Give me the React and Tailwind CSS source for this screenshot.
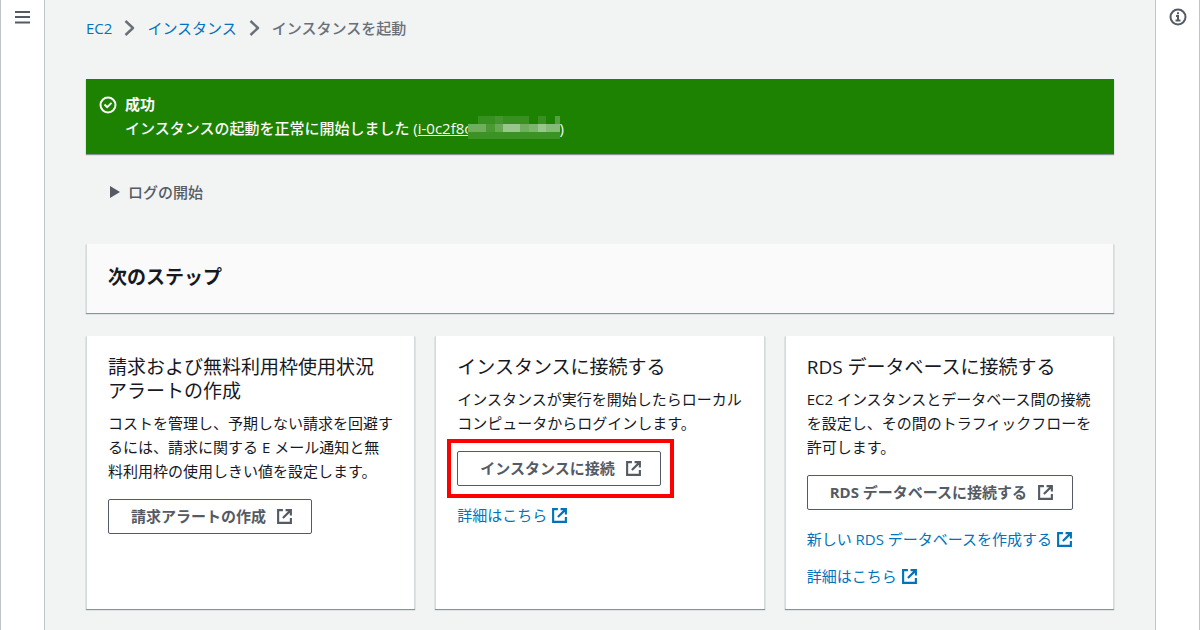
import React from 'react';

const ExternalIcon = () => (
  <svg width="17" height="17" viewBox="0 0 16 16" fill="none" stroke="currentColor" strokeWidth="2" className="shrink-0" aria-hidden="true">
    <path d="M6.5 2H2v12h12V9.5" />
    <path d="M9 2h5v5M14 2L6.5 9.5" />
  </svg>
);

const Chevron = () => (
  <svg width="11" height="16" viewBox="0 0 11 16" fill="none" stroke="#687078" strokeWidth="2.4" strokeLinejoin="round" aria-hidden="true">
    <path d="M1.5 1l7.5 7-7.5 7" />
  </svg>
);

// [x, y, width, height, opacity]
const mosaic = [
  [0, 16, 92, 7, 0.14],
  [10, 0, 51, 8, 0.12],
  [27, 0, 8, 8, 0.06],
  [70, 0, 8, 8, 0.12],
  [87, 0, 5, 8, 0.25],
  [0, 8, 18, 8, 0.36],
  [18, 8, 9, 8, 0.2],
  [27, 8, 8, 8, 0.32],
  [35, 8, 17, 8, 0.55],
  [52, 8, 9, 8, 0.36],
  [61, 8, 9, 8, 0.42],
  [70, 8, 8, 8, 0.55],
  [78, 8, 14, 8, 0.46],
];

const steps = [
  {
    title: '請求および無料利用枠使用状況アラートの作成',
    text: 'コストを管理し、予期しない請求を回避するには、請求に関する E メール通知と無料利用枠の使用しきい値を設定します。',
    button: '請求アラートの作成',
    links: [],
  },
  {
    title: 'インスタンスに接続する',
    text: 'インスタンスが実行を開始したらローカルコンピュータからログインします。',
    button: 'インスタンスに接続',
    highlight: true,
    links: ['詳細はこちら'],
  },
  {
    title: 'RDS データベースに接続する',
    text: 'EC2 インスタンスとデータベース間の接続を設定し、その間のトラフィックフローを許可します。',
    button: 'RDS データベースに接続する',
    links: ['新しい RDS データベースを作成する', '詳細はこちら'],
  },
];

const StepCard = ({ step }) => (
  <article className="bg-white border-x border-[#d5dbdb] shadow-[0_1px_1px_#879596] px-[21px] pt-[19px] pb-[21px]">
    <h3 className="pr-2 text-[19px] leading-6 text-[#16191f]">{step.title}</h3>
    <p className="mt-2 leading-6">{step.text}</p>
    <div className="mt-4 flex">
      <div className="relative">
        <button className="flex items-center gap-[10px] h-[35px] pl-[22px] pr-[18px] border border-[#545b64] rounded-xs bg-white font-bold text-[#545b64] whitespace-nowrap">
          {step.button}
          <ExternalIcon />
        </button>
        {step.highlight && (
          <div className="absolute -left-[10px] -right-[13px] -top-3 -bottom-3 border-4 border-[#ff0000] pointer-events-none"></div>
        )}
      </div>
    </div>
    <div className="mt-[17px] flex flex-col items-start gap-[13px]">
      {step.links.map((link) => (
        <a key={link} href="#" className="flex items-center gap-1 leading-6 text-[#0073bb]">
          {link}
          <ExternalIcon />
        </a>
      ))}
    </div>
  </article>
);

const App = () => {
  return (
    <div className="flex min-h-screen bg-[#f2f3f3] text-[15px] text-[#16191f] font-['Open_Sans','Noto_Sans_CJK_JP',sans-serif]">
      <nav className="w-[45px] shrink-0 bg-white border-x border-[#bfc5c6] flex flex-col items-center pt-2">
        <button aria-label="メニュー" className="text-[#545b64]">
          <svg width="16" height="18" viewBox="0 0 16 18" fill="none" stroke="currentColor" strokeWidth="2">
            <path d="M0 4h15M0 9h15M0 14.5h15" />
          </svg>
        </button>
      </nav>

      <main className="flex-1 min-w-0 px-[41px] pt-4 pb-5">
        <nav className="flex items-center gap-3 leading-6">
          <a href="#" className="text-[#0073bb]">EC2</a>
          <Chevron />
          <a href="#" className="text-[#0073bb]">インスタンス</a>
          <Chevron />
          <span className="text-[#687078] font-medium">インスタンスを起動</span>
        </nav>

        <section className="mt-[39px] flex gap-2 bg-[#1d8102] text-[#fafafa] px-[13px] pt-[13px] pb-[14px] leading-6 shadow-[0_1px_1px_#879596]">
          <svg width="18" height="18" viewBox="0 0 18 18" fill="none" stroke="currentColor" strokeWidth="2" className="mt-1 shrink-0" aria-hidden="true">
            <circle cx="9" cy="9" r="7.5" />
            <path d="M5.5 8.5l2.7 2.7 4.3-4.3" />
          </svg>
          <div>
            <h2 className="font-bold">成功</h2>
            <p className="flex font-medium">
              <span className="whitespace-pre">インスタンスの起動を正常に開始しました (</span>
              <a href="#" className="underline">i-0c2f8c</a>
              <svg width="92" height="24" viewBox="0 0 92 24" fill="#fff" shapeRendering="crispEdges" className="-ml-1 relative" aria-hidden="true">
                <rect width="92" height="24" fill="#1d8102" />
                {mosaic.map(([x, y, w, h, o], i) => (
                  <rect key={i} x={x} y={y} width={w} height={h} opacity={o} />
                ))}
              </svg>
              )
            </p>
          </div>
        </section>

        <button className="mt-[26px] ml-6 flex items-center gap-2 leading-6 font-medium text-[#545b64]">
          <svg width="10" height="12" viewBox="0 0 10 12" fill="currentColor" aria-hidden="true">
            <path d="M0 0l10 6-10 6z" />
          </svg>
          ログの開始
        </button>

        <section className="mt-10 bg-[#fafafa] border-x border-[#d5dbdb] shadow-[0_1px_1px_#879596] px-[21px] pt-[19px] pb-[22px]">
          <h2 className="text-[19px] leading-7 font-bold">次のステップ</h2>
        </section>

        <div className="mt-[23px] grid grid-cols-3 gap-5">
          {steps.map((step) => (
            <StepCard key={step.title} step={step} />
          ))}
        </div>
      </main>

      <aside className="w-[45px] shrink-0 bg-white border-x border-[#bfc5c6] flex flex-col items-center pt-2">
        <button aria-label="情報" className="text-[#545b64]">
          <svg width="18" height="18" viewBox="0 0 18 18" fill="none" stroke="currentColor" strokeWidth="2">
            <circle cx="9" cy="9" r="7.5" />
            <path d="M8 5.2h2M7 8h2v4.5M6.5 12.5h5" />
          </svg>
        </button>
      </aside>
    </div>
  );
};

export default App;
